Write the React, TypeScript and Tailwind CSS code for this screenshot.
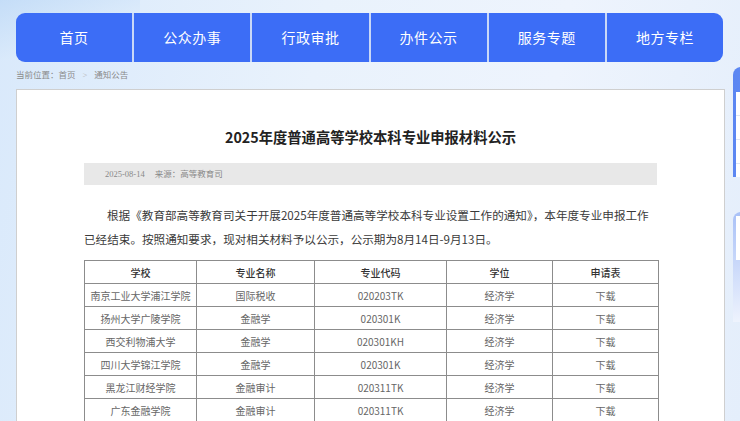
const navItems = ['首页', '公众办事', '行政审批', '办件公示', '服务专题', '地方专栏']

type Row = {
  school: string
  major: string
  code: string
  degree: string
}

const rows: Row[] = [
  { school: '南京工业大学浦江学院', major: '国际税收', code: '020203TK', degree: '经济学' },
  { school: '扬州大学广陵学院', major: '金融学', code: '020301K', degree: '经济学' },
  { school: '西交利物浦大学', major: '金融学', code: '020301KH', degree: '经济学' },
  { school: '四川大学锦江学院', major: '金融学', code: '020301K', degree: '经济学' },
  { school: '黑龙江财经学院', major: '金融审计', code: '020311TK', degree: '经济学' },
  { school: '广东金融学院', major: '金融审计', code: '020311TK', degree: '经济学' },
]

const sans = "font-['Noto_Sans_CJK_SC','Noto_Sans',sans-serif]"
const serif = "font-['Liberation_Serif','Noto_Sans_CJK_SC',serif]"

export default function App() {
  return (
    <div
      className={`relative w-[740px] h-[421px] overflow-hidden bg-[linear-gradient(100deg,#d9e9fb_0%,#e9f2fc_40%,#eef4fd_70%,#e4eefb_100%)] ${sans}`}
    >
      {/* top-left light sheen */}
      <div className="absolute left-0 top-0 w-[140px] h-[60px] bg-[linear-gradient(160deg,#bcd8f6_0%,#dcebfb_60%,transparent_100%)] opacity-70" />

      <div className="relative pt-[13px] pl-4">
        {/* Nav */}
        <div className="flex w-[707px] h-[49px] rounded-[9px] overflow-hidden bg-[#c9d8f7] gap-[2px]">
          {navItems.map((item) => (
            <div
              key={item}
              className="flex-1 bg-[#3c6df6] flex items-center justify-center text-white text-[14px] tracking-[0.5px]"
            >
              {item}
            </div>
          ))}
        </div>

        {/* Breadcrumb */}
        <div className={`mt-[5px] h-[17px] flex items-center text-[8.5px] text-[#8a8a8a] ${serif}`}>
          <span>当前位置：首页</span>
          <span className="mx-[7px] text-[#b5b5b5]">&gt;</span>
          <span>通知公告</span>
        </div>

        <div className="flex mt-[5px] gap-2">
          {/* Main panel */}
          <div className="w-[709px] h-[400px] shrink-0 bg-white border border-[#cfcfcf] border-b-0 pt-[35px] px-[67px]">
            <h1 className="text-center text-[14.3px] font-bold text-[#222] leading-[24px]">
              2025年度普通高等学校本科专业申报材料公示
            </h1>

            <div className={`mt-[14px] h-[22px] bg-[#e8e8e8] flex items-center pl-[21px] text-[8.5px] text-[#888] ${serif}`}>
              2025-08-14<span className="ml-[10px]">来源：高等教育司</span>
            </div>

            <p className="mt-[18px] text-[11.6px] leading-[24px] text-[#3a3a3a] indent-[23px]">
              根据《教育部高等教育司关于开展2025年度普通高等学校本科专业设置工作的通知》，本年度专业申报工作已经结束。按照通知要求，现对相关材料予以公示，公示期为8月14日-9月13日。
            </p>

            <table className="mt-[9px] w-[574px] border-collapse text-[10px] text-[#666] table-fixed">
              <colgroup>
                <col className="w-[112px]" />
                <col className="w-[118px]" />
                <col className="w-[132px]" />
                <col className="w-[106px]" />
                <col className="w-[106px]" />
              </colgroup>
              <thead>
                <tr className="h-[23px]">
                  {['学校', '专业名称', '专业代码', '学位', '申请表'].map((h) => (
                    <th key={h} className="border border-[#8c8c8c] font-medium text-[#333] text-center p-0">
                      {h}
                    </th>
                  ))}
                </tr>
              </thead>
              <tbody>
                {rows.map((r, i) => (
                  <tr key={i} className="h-[23px]">
                    <td className="border border-[#8c8c8c] text-center p-0 whitespace-nowrap">{r.school}</td>
                    <td className="border border-[#8c8c8c] text-center p-0">{r.major}</td>
                    <td className="border border-[#8c8c8c] text-center p-0">{r.code}</td>
                    <td className="border border-[#8c8c8c] text-center p-0">{r.degree}</td>
                    <td className="border border-[#8c8c8c] text-center p-0">下载</td>
                  </tr>
                ))}
              </tbody>
            </table>
          </div>

          {/* Sidebar peek */}
          <div className="w-[200px] shrink-0 -mt-[22px]">
            <div className="rounded-t-[8px] bg-[linear-gradient(90deg,#5b86f2_0%,#9ab6f6_100%)] pt-[25px] px-[3px] pb-0 h-[110px]">
              <div className="bg-white h-full flex flex-col">
                {[0, 1, 2].map((i) => (
                  <div key={i} className="h-[24px] border-b border-[#dfe6f4] pl-[4px] flex items-center">
                    <span className="block w-[2px] h-[2px] bg-[#aaa]" />
                  </div>
                ))}
              </div>
            </div>
            <div className="mt-[35px] h-[110px] rounded-t-[8px] bg-[linear-gradient(180deg,#a9c1f7_0%,#eef3fd_100%)] px-[3px] pt-[4px]">
              <div className="bg-white h-[44px]" />
            </div>
          </div>
        </div>
      </div>
    </div>
  )
}
